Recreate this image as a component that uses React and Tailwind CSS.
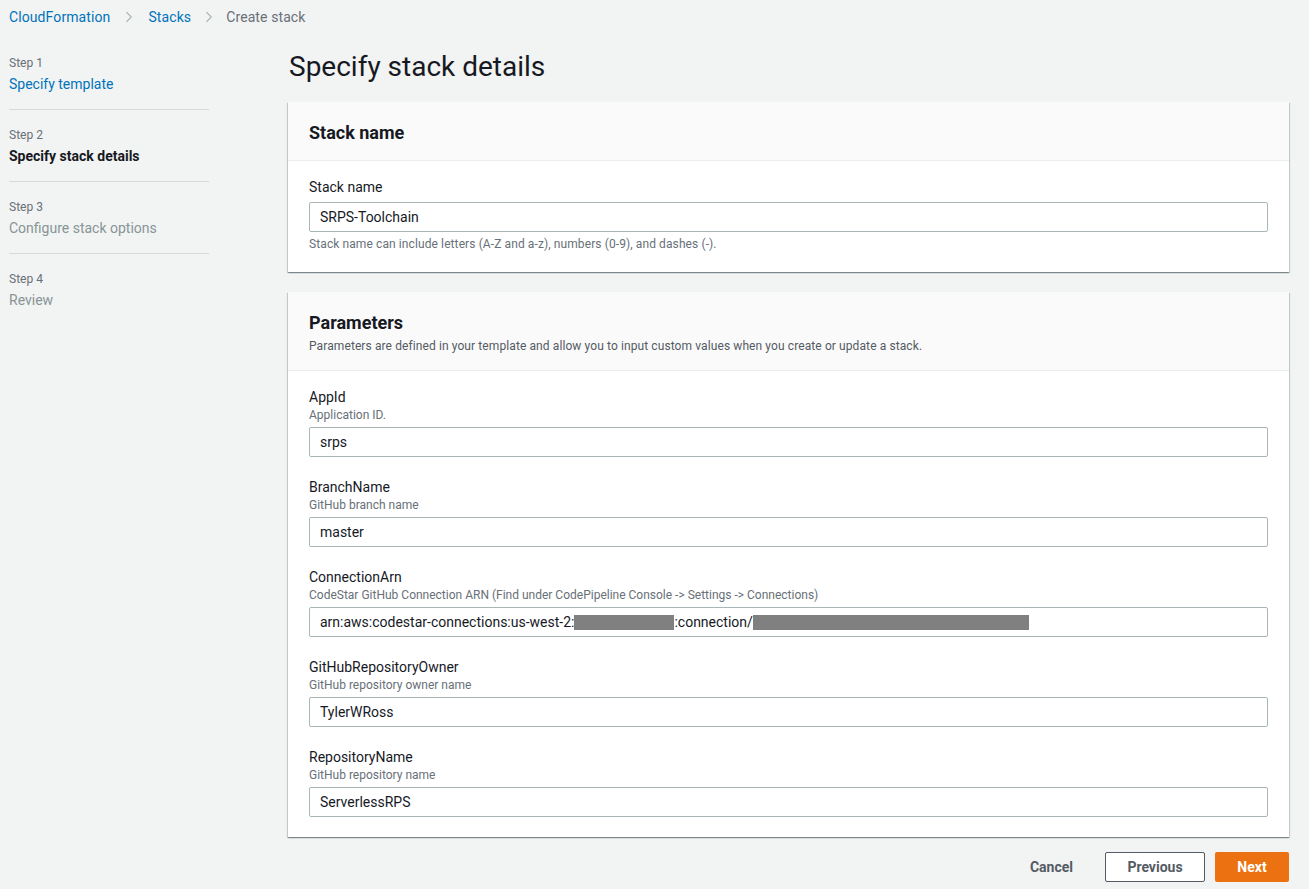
import { ChevronRight } from "lucide-react";

const params = [
  { name: "AppId", desc: "Application ID.", value: "srps" },
  { name: "BranchName", desc: "GitHub branch name", value: "master" },
  {
    name: "ConnectionArn",
    desc: "CodeStar GitHub Connection ARN (Find under CodePipeline Console -> Settings -> Connections)",
    arn: true,
  },
  { name: "GitHubRepositoryOwner", desc: "GitHub repository owner name", value: "TylerWRoss" },
  { name: "RepositoryName", desc: "GitHub repository name", value: "ServerlessRPS" },
];

const steps = [
  { step: "Step 1", title: "Specify template", state: "link" },
  { step: "Step 2", title: "Specify stack details", state: "active" },
  { step: "Step 3", title: "Configure stack options", state: "disabled" },
  { step: "Step 4", title: "Review", state: "disabled" },
];

const Input = ({ children }) => (
  <div className="h-[30px] border border-[#aab7b8] rounded-[2px] bg-white px-[10px] flex items-center text-[14px] text-[#16191f]">
    {children}
  </div>
);

const Card = ({ children }) => (
  <div className="bg-white shadow-[0_1px_1px_0_rgba(0,28,36,0.3),1px_1px_1px_0_rgba(0,28,36,0.15),-1px_1px_1px_0_rgba(0,28,36,0.15)]">
    {children}
  </div>
);

export default function App() {
  return (
    <div className="min-h-screen bg-[#f2f3f3] font-['Roboto',sans-serif] text-[#16191f]">
      {/* breadcrumbs */}
      <div className="flex items-center h-[20px] pt-[7px] pl-[9px] box-content text-[14px] tracking-[0.1px]">
        <span className="text-[#0073bb]">CloudFormation</span>
        <ChevronRight className="mx-[10px] h-[18px] w-[18px] text-[#aab7b8]" strokeWidth={1.5} />
        <span className="text-[#0073bb]">Stacks</span>
        <ChevronRight className="ml-[9px] mr-[8px] h-[18px] w-[18px] text-[#aab7b8]" strokeWidth={1.5} />
        <span className="text-[#687078]">Create stack</span>
      </div>

      <div className="flex">
        {/* wizard steps */}
        <div className="w-[200px] ml-[9px] pt-[28px] shrink-0">
          {steps.map((s, i) => (
            <div key={s.step}>
              {i > 0 && <div className="h-px bg-[#d5dbdb] mt-[15px] mb-[17px]" />}
              <div className="text-[12px] leading-[16px] text-[#687078]">{s.step}</div>
              <div
                className={`mt-[3px] text-[14px] leading-[20px] ${
                  s.state === "link"
                    ? "text-[#0073bb]"
                    : s.state === "active"
                    ? "font-bold text-[#16191f]"
                    : "text-[#879596]"
                }`}
              >
                {s.title}
              </div>
            </div>
          ))}
        </div>

        {/* main */}
        <div className="ml-[79px] w-[1001px] pb-[7px]">
          <h1 className="text-[28px] leading-[36px] mt-[22px] ml-px text-[#16191f]">Specify stack details</h1>

          <div className="mt-[17px] space-y-[20px]">
            <Card>
              <div className="bg-[#fafafa] border-b border-[#eaeded] px-[21px] pt-[20px] pb-[16px]">
                <h2 className="text-[18px] leading-[22px] font-bold">Stack name</h2>
              </div>
              <div className="px-[21px] pt-[16px] pb-[20px]">
                <div className="text-[14px] leading-[20px]">Stack name</div>
                <div className="mt-[5px]">
                  <Input>SRPS-Toolchain</Input>
                </div>
                <div className="mt-[4px] text-[12px] leading-[16px] tracking-[0.1px] text-[#687078]">
                  Stack name can include letters (A-Z and a-z), numbers (0-9), and dashes (-).
                </div>
              </div>
            </Card>

            <Card>
              <div className="bg-[#fafafa] border-b border-[#eaeded] px-[21px] pt-[20px] pb-[16px]">
                <h2 className="text-[18px] leading-[22px] font-bold">Parameters</h2>
                <p className="mt-[4px] text-[12px] leading-[16px] tracking-[0.1px] text-[#545b64]">
                  Parameters are defined in your template and allow you to input custom values when you create or update a stack.
                </p>
              </div>
              <div className="px-[21px] pt-[16px] pb-[20px] space-y-[20px]">
                {params.map((p) => (
                  <div key={p.name}>
                    <div className="text-[14px] leading-[20px]">{p.name}</div>
                    <div className="text-[12px] leading-[16px] text-[#687078]">{p.desc}</div>
                    <div className="mt-[4px]">
                      <Input>
                        {p.arn ? (
                          <span className="flex items-center">
                            arn:aws:codestar-connections:us-west-2:
                            <span className="inline-block w-[100px] h-[15px] bg-[#808080]" />
                            :connection/
                            <span className="inline-block w-[276px] h-[15px] bg-[#808080]" />
                          </span>
                        ) : (
                          p.value
                        )}
                      </Input>
                    </div>
                  </div>
                ))}
              </div>
            </Card>
          </div>

          {/* actions */}
          <div className="mt-[15px] flex items-center justify-end text-[14px] font-bold">
            <span className="text-[#545b64] mr-[32px]">Cancel</span>
            <button className="h-[30px] w-[100px] border border-[#545b64] rounded-[2px] bg-white text-[#545b64]">
              Previous
            </button>
            <button className="ml-[10px] h-[30px] w-[74px] rounded-[2px] bg-[#ec7211] text-white">
              Next
            </button>
          </div>
        </div>
      </div>
    </div>
  );
}
